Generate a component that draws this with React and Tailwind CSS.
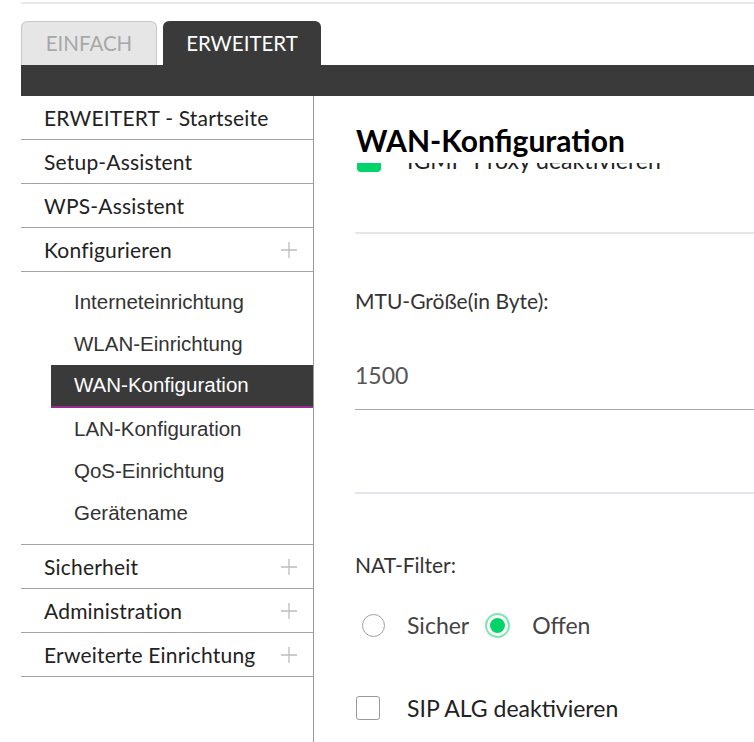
import React from "react";

const Plus = () => (
  <svg width="18" height="18" viewBox="0 0 18 18" className="shrink-0">
    <path d="M9 1v16M1 9h16" stroke="#bdbdbd" strokeWidth="1.3" />
  </svg>
);

const TopItem = ({ label, plus }) => (
  <div className="h-[44px] border-b border-[#a3a3a3] flex items-center justify-between pl-[23px] pr-[15px] text-[21px] tracking-[0.2px] text-[#222]">
    <span>{label}</span>
    {plus && <Plus />}
  </div>
);

const SubItem = ({ label, active }) =>
  active ? (
    <div className="ml-[30px] h-[43px] bg-[#3a3a3a] border-b-2 border-[#9a2c93] flex items-center pl-[23px] text-white">
      {label}
    </div>
  ) : (
    <div className="h-[42px] flex items-center pl-[53px] text-[#333]">{label}</div>
  );

export default function App() {
  return (
    <div className="w-[754px] h-[742px] overflow-hidden bg-white font-['Lato',sans-serif]">
      <div className="ml-[21px] mt-[2px] h-[2px] bg-[#e9e9e9]" />
      <div className="ml-[21px] mt-[17px] flex items-end gap-[6px] text-[20.5px]">
        <div className="w-[136px] h-[44px] rounded-t-[6px] border border-b-0 border-[#c8c8c8] bg-[#e6e6e6] text-[#a8a8a8] flex items-center justify-center">
          EINFACH
        </div>
        <div className="w-[158px] h-[44px] rounded-t-[6px] bg-[#3a3a3a] text-white flex items-center justify-center">
          ERWEITERT
        </div>
      </div>
      <div className="ml-[21px] h-[31px] bg-[#3a3a3a]" />
      <div className="ml-[21px] flex h-[700px]">
        <div className="w-[293px] shrink-0 border-r border-[#9a9a9a]">
          <TopItem label="ERWEITERT - Startseite" />
          <TopItem label="Setup-Assistent" />
          <TopItem label="WPS-Assistent" />
          <TopItem label="Konfigurieren" plus />
          <div className="border-b border-[#a3a3a3] pt-[9px] pb-[10px] text-[20.5px] font-['Liberation_Sans',Arial,sans-serif]">
            <SubItem label="Interneteinrichtung" />
            <SubItem label="WLAN-Einrichtung" />
            <SubItem label="WAN-Konfiguration" active />
            <SubItem label="LAN-Konfiguration" />
            <SubItem label="QoS-Einrichtung" />
            <SubItem label="Gerätename" />
          </div>
          <TopItem label="Sicherheit" plus />
          <TopItem label="Administration" plus />
          <TopItem label="Erweiterte Einrichtung" plus />
        </div>
        <div className="flex-1 min-w-0 flex flex-col">
          <div className="h-[67px] pl-[42px] pt-[26px] shrink-0 relative z-10 bg-white">
            <h1 className="text-[30px] leading-[36px] font-bold text-black">WAN-Konfiguration</h1>
          </div>
          <div className="flex-1 overflow-hidden pl-[41px]">
            <div className="-mt-[14px] h-[23px] flex items-center">
              <div className="w-[24px] h-[23px] ml-[2px] rounded-[4px] bg-[#00d46a]" />
              <span className="ml-[26px] text-[23px] text-[#222]">IGMP-Proxy deaktivieren</span>
            </div>
            <div className="mt-[60px] h-[2px] w-[500px] bg-[#e3e7eb]" />
            <div className="mt-[55px] h-[24px] leading-[24px] text-[21px] text-[#333]">MTU-Größe(in Byte):</div>
            <div className="mt-[50px] h-[24px] leading-[24px] text-[23px] text-[#555]">1500</div>
            <div className="mt-[22px] h-px w-[500px] bg-[#a8a8a8]" />
            <div className="mt-[82px] h-[2px] w-[500px] bg-[#e3e7eb]" />
            <div className="mt-[59px] h-[24px] leading-[24px] text-[21px] text-[#333]">NAT-Filter:</div>
            <div className="mt-[36px] h-[24px] flex items-center">
              <div className="ml-[7px] w-[23px] h-[23px] rounded-full border border-[#a0a0a0] bg-white" />
              <span className="ml-[22px] text-[23px] text-[#444]">Sicher</span>
              <div className="ml-[16px] w-[25px] h-[25px] rounded-full border-2 border-[#7fe6ae] bg-white flex items-center justify-center">
                <div className="w-[15px] h-[15px] rounded-full bg-[#00d469]" />
              </div>
              <span className="ml-[22px] text-[23px] text-[#444]">Offen</span>
            </div>
            <div className="mt-[59px] h-[24px] flex items-center">
              <div className="ml-[1px] w-[24px] h-[24px] rounded-[3px] border border-[#9a9a9a] bg-white" />
              <span className="ml-[27px] text-[23px] text-[#222]">SIP ALG deaktivieren</span>
            </div>
          </div>
        </div>
      </div>
    </div>
  );
}
